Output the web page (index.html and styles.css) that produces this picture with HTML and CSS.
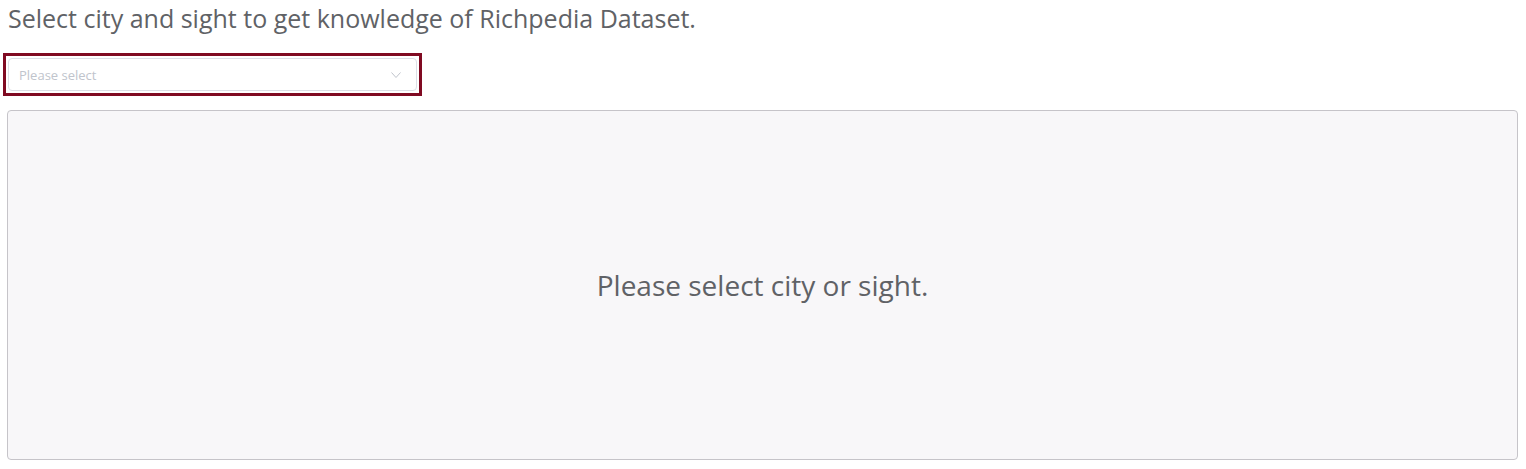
FILE: index.html
```html
<!DOCTYPE html>
<html>
<head>
<meta charset="utf-8">
<link rel="stylesheet" href="styles.css">
</head>
<body>
<div class="page">
  <p class="intro">Select city and sight to get knowledge of Richpedia Dataset.</p>
  <div class="select-frame">
    <div class="select">
      <span class="placeholder">Please select</span>
      <svg class="arrow" width="12" height="12" viewBox="0 0 12 12"><path d="M1.5 3.5 L6 8.5 L10.5 3.5" fill="none" stroke="#c0c4cc" stroke-width="1"/></svg>
    </div>
  </div>
  <div class="panel">
    <span class="empty">Please select city or sight.</span>
  </div>
</div>
</body>
</html>
```
FILE: styles.css
```css
html, body { margin: 0; padding: 0; background: #fff; }
body { font-family: "Open Sans", "Noto Sans", sans-serif; }
.page { padding: 0 8px 0 7px; }
.intro {
  margin: 0;
  padding: 3px 0 0 1px;
  height: 40px;
  box-sizing: border-box;
  font-size: 25px;
  line-height: 30px;
  color: #606266;
  white-space: nowrap;
}
.select-frame {
  margin: 13px 0 0 -4px;
  width: 409px;
  height: 33px;
  border: 3px solid #800a22;
  padding: 2px;
  background: #fff;
}
.select {
  height: 33px;
  box-sizing: border-box;
  border: 1px solid #dcdfe6;
  border-radius: 4px;
  display: flex;
  align-items: center;
  justify-content: space-between;
  padding: 0 14px 0 10px;
}
.placeholder { font-size: 13px; color: #c0c4cc; }
.arrow { display: block; }
.panel {
  margin-top: 14px;
  height: 350px;
  box-sizing: border-box;
  border: 1px solid #c6c4c9;
  border-radius: 4px;
  background: #f8f7f9;
  display: flex;
  align-items: center;
  justify-content: center;
}
.empty { font-size: 28px; color: #606266; }
```
